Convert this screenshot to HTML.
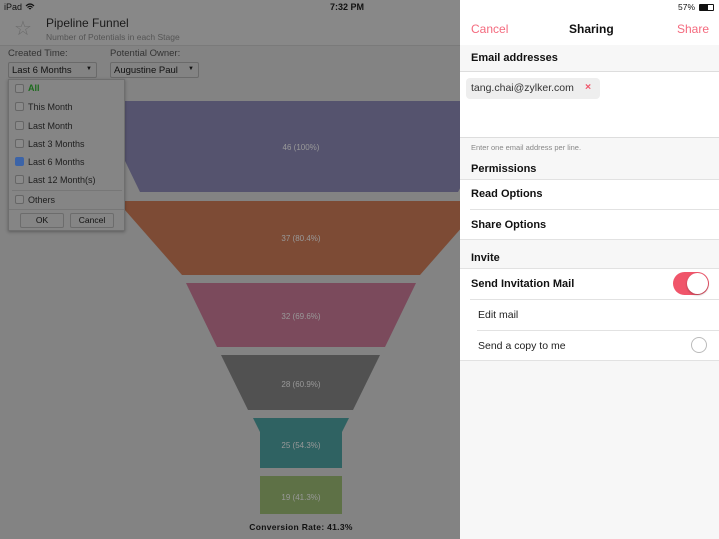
<!DOCTYPE html>
<html><head><meta charset="utf-8"><style>
*{margin:0;padding:0;box-sizing:border-box}
body{width:719px;height:539px;overflow:hidden;position:relative;font-family:"Liberation Sans",sans-serif;background:#838383}
.a{position:absolute}
.l{font-size:10px;color:#222}
.cb{position:absolute;width:9px;height:9px;border:1px solid #666;border-radius:2px;background:#8a8a8a}
.dd .it{position:absolute;left:27px;font-size:9px;color:#1e1e1e}
.r{position:absolute;left:460px;width:259px}
.b{font-weight:bold;font-size:11px;color:#111}
</style></head><body>
<div class="a" style="left:0;top:0;width:460px;height:45px;background:#888"></div>
<div class="a" style="left:0;top:45px;width:460px;height:1px;background:#7a7a7a"></div>
<div class="a" style="left:4px;top:2px;font-size:9px;color:#111">iPad <svg width="10" height="8" viewBox="0 0 10 8" style="vertical-align:-1px"><path d="M1 3Q5 -1 9 3M2.5 4.5Q5 2 7.5 4.5M4 6Q5 5 6 6" stroke="#111" stroke-width="1.2" fill="none"/></svg></div>
<div class="a" style="left:330px;top:2px;font-size:9px;font-weight:bold;color:#111">7:32 PM</div>
<div class="a" style="left:14px;top:16px;font-size:20px;color:#6a6a6a">☆</div>
<div class="a" style="left:46px;top:16px;font-size:12px;color:#1a1a1a">Pipeline Funnel</div>
<div class="a" style="left:46px;top:32px;font-size:8.5px;color:#555">Number of Potentials in each Stage</div>
<div class="a l" style="left:8px;top:48px;color:#333;font-size:9.5px">Created Time:</div>
<div class="a l" style="left:110px;top:48px;color:#333;font-size:9.5px">Potential Owner:</div>
<div class="a" style="left:8px;top:62px;width:89px;height:16px;border:1px solid #6a6a6a;border-radius:2px;font-size:9.5px;padding:2px 3px;color:#111">Last 6 Months<span style="position:absolute;right:4px;top:3px;font-size:6px">▼</span></div>
<div class="a" style="left:110px;top:62px;width:89px;height:16px;border:1px solid #6a6a6a;border-radius:2px;font-size:9.5px;padding:2px 3px;color:#111">Augustine Paul<span style="position:absolute;right:4px;top:3px;font-size:6px">▼</span></div>
<svg class="a" style="left:0;top:0" width="460" height="539">
<polygon points="96,101 506,101 458,192 140,192" fill="#55536e"/>
<polygon points="117,201 485,201 420,275 182,275" fill="#7d4b35"/>
<polygon points="186,283 416,283 385,347 217,347" fill="#7b4a5c"/>
<polygon points="221,355 380,355 353,410 248,410" fill="#515151"/>
<polygon points="253,418 349,418 342,432 342,468 260,468 260,432" fill="#2f6262"/>
<rect x="260" y="476" width="82" height="38" fill="#5e7146"/>
<g font-family="Liberation Sans" font-size="8" fill="#999" text-anchor="middle">
<text x="301" y="150">46 (100%)</text><text x="301" y="241">37 (80.4%)</text><text x="301" y="319">32 (69.6%)</text>
<text x="301" y="387">28 (60.9%)</text><text x="301" y="448">25 (54.3%)</text><text x="301" y="500">19 (41.3%)</text></g>
<text x="301" y="530" font-family="Liberation Sans" font-size="8.5" font-weight="bold" fill="#111" text-anchor="middle" letter-spacing=".3">Conversion Rate: 41.3%</text>
</svg>
<div class="a dd" style="left:8px;top:79px;width:117px;height:152px;background:#858585;border:1px solid #6e6e6e;box-shadow:0 1px 3px rgba(0,0,0,.3)">
<div class="cb" style="left:6px;top:4px"></div><div class="it" style="left:19px;top:3px;color:#1d6b1d;font-weight:bold">All</div>
<div class="cb" style="left:6px;top:22px"></div><div class="it" style="left:19px;top:22px">This Month</div>
<div class="cb" style="left:6px;top:41px"></div><div class="it" style="left:19px;top:41px">Last Month</div>
<div class="cb" style="left:6px;top:59px"></div><div class="it" style="left:19px;top:59px">Last 3 Months</div>
<div class="cb" style="left:6px;top:77px;background:#3c64a8;border-color:#3c64a8"></div><div class="it" style="left:19px;top:77px">Last 6 Months</div>
<div class="cb" style="left:6px;top:95px"></div><div class="it" style="left:19px;top:95px">Last 12 Month(s)</div>
<div class="a" style="left:3px;top:110px;width:110px;height:1px;background:#777"></div>
<div class="cb" style="left:6px;top:115px"></div><div class="it" style="left:19px;top:115px">Others</div>
<div class="a" style="left:0;top:129px;width:115px;height:1px;background:#777"></div>
<div class="a" style="left:11px;top:133px;width:44px;height:15px;border:1px solid #6c6c6c;border-radius:2px;font-size:8.5px;text-align:center;line-height:13px;color:#111">OK</div>
<div class="a" style="left:61px;top:133px;width:44px;height:15px;border:1px solid #6c6c6c;border-radius:2px;font-size:8.5px;text-align:center;line-height:13px;color:#111">Cancel</div>
</div>
<div class="r" style="top:0;height:539px;background:#f7f7f7"></div>
<div class="r" style="top:0;height:45px;background:#fff"></div>
<div class="a" style="left:678px;top:2px;font-size:8.5px;color:#111">57%</div>
<div class="a" style="left:699px;top:4px;width:15px;height:7px;border:1px solid #111;border-radius:1px"><div style="width:8px;height:5px;background:#111"></div></div>
<div class="a" style="left:471px;top:22px;font-size:12px;color:#f46a7e">Cancel</div>
<div class="a" style="left:569px;top:22px;font-size:12px;font-weight:bold;color:#111">Sharing</div>
<div class="a" style="left:677px;top:22px;font-size:12px;color:#f46a7e">Share</div>
<div class="a b" style="left:471px;top:52px">Email addresses</div>
<div class="r" style="top:71px;height:67px;background:#fff;border-top:1px solid #ddd;border-bottom:1px solid #ddd"></div>
<div class="a" style="left:466px;top:78px;width:134px;height:21px;background:#eee;border-radius:4px;font-size:10.5px;color:#333;padding:4px 5px">tang.chai@zylker.com<span style="position:absolute;left:119px;top:3px;color:#f0556a;font-weight:bold">×</span></div>
<div class="a" style="left:471px;top:143px;font-size:7.5px;color:#888">Enter one email address per line.</div>
<div class="a b" style="left:471px;top:163px">Permissions</div>
<div class="r" style="top:179px;height:61px;background:#fff;border-top:1px solid #e2e2e2;border-bottom:1px solid #e2e2e2"></div>
<div class="a b" style="left:471px;top:188px">Read Options</div>
<div class="a" style="left:470px;top:209px;width:249px;height:1px;background:#e2e2e2"></div>
<div class="a b" style="left:471px;top:219px">Share Options</div>
<div class="a b" style="left:471px;top:252px">Invite</div>
<div class="r" style="top:268px;height:93px;background:#fff;border-top:1px solid #e2e2e2;border-bottom:1px solid #e2e2e2"></div>
<div class="a b" style="left:471px;top:278px">Send Invitation Mail</div>
<div class="a" style="left:673px;top:272px;width:36px;height:23px;border-radius:12px;background:#f0556a"></div>
<div class="a" style="left:687px;top:273px;width:21px;height:21px;border-radius:50%;background:#fff;box-shadow:0 1px 2px rgba(0,0,0,.3)"></div>
<div class="a" style="left:470px;top:299px;width:249px;height:1px;background:#e2e2e2"></div>
<div class="a" style="left:478px;top:309px;font-size:10.5px;color:#222">Edit mail</div>
<div class="a" style="left:477px;top:330px;width:242px;height:1px;background:#e2e2e2"></div>
<div class="a" style="left:478px;top:340px;font-size:10.5px;color:#222">Send a copy to me</div>
<div class="a" style="left:691px;top:337px;width:16px;height:16px;border-radius:50%;border:1px solid #bbb"></div>
</body></html>
